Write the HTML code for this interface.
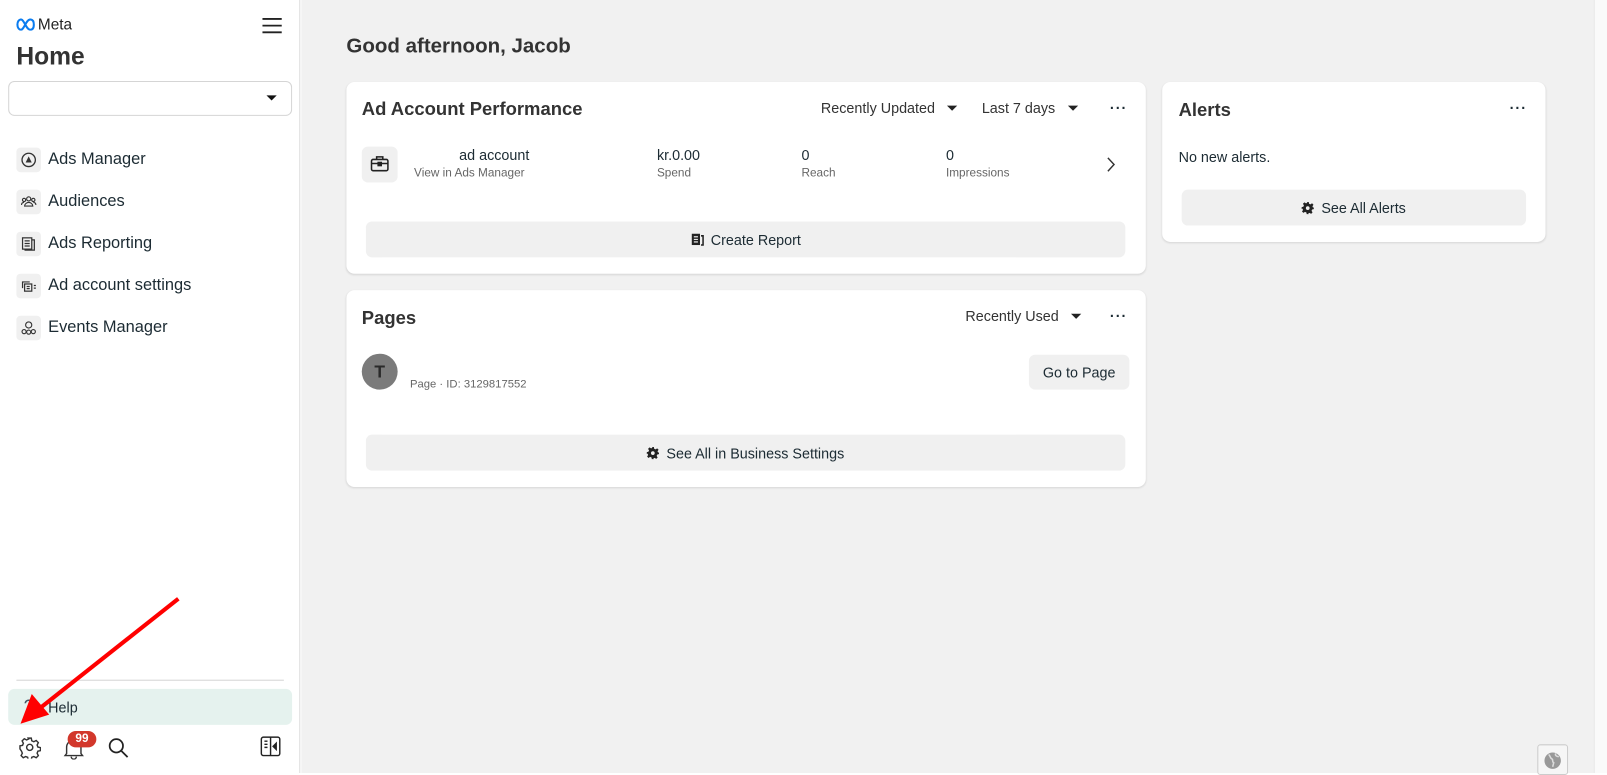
<!DOCTYPE html>
<html><head><meta charset="utf-8"><style>
*{box-sizing:border-box;margin:0;padding:0}
html,body{width:1607px;height:773px;overflow:hidden;background:#fff}
body{font-family:"Liberation Sans",Arial,sans-serif;color:#1c2b33}
#w{position:absolute;left:0;top:0;width:1568px;height:754px;transform:scale(1.02487,1.0252);transform-origin:0 0}
.a{position:absolute}
.side{left:0;top:0;width:293px;height:754px;background:#fff;border-right:1px solid #dcdcdc}
.main{left:294px;top:0;width:1261px;height:754px;background:#f1f1f1}
.strip{left:1555px;top:0;width:13px;height:754px;background:#fafafa;border-left:1px solid #e6e6e6}
.card{position:absolute;background:#fff;border-radius:8px;box-shadow:0 1px 2px rgba(0,0,0,.12)}
.ttl{position:absolute;font-size:18px;font-weight:bold;color:#333}
.btn{position:absolute;background:#f0f0f0;border-radius:6px;font-size:14px;display:flex;align-items:center;justify-content:center;gap:7px;color:#1c2b33}
.dots{position:absolute;font-size:14px;font-weight:bold;letter-spacing:1px}
.dd{position:absolute;font-size:14px;color:#333}
.dd:after{content:"";display:inline-block;margin-left:12px;border:5px solid transparent;border-top:5px solid #222;border-bottom:0;vertical-align:2px}
.nav{position:absolute;left:16px;display:flex;align-items:center;gap:7px;font-size:16px;color:#1c2b33}
.ni{width:24px;height:24px;background:#f0f0f0;border-radius:4px;display:flex;align-items:center;justify-content:center}
.v{position:absolute;font-size:14px}
.l{position:absolute;font-size:11.5px;color:#666}
</style></head><body><div id="w">
<div class="a side"></div>
<div class="a main"></div>
<div class="a strip"></div>

<svg class="a" style="left:15px;top:18px" width="20" height="12" viewBox="0 0 20 12"><path d="M2 6c0-3 1.5-5 3.5-5 3 0 5 10 9 10 2.5 0 3.5-2 3.5-5s-1-5-3.5-5c-4 0-6 10-9 10C3.5 11 2 9 2 6z" fill="none" stroke="#0a7cf0" stroke-width="2"/></svg>
<div class="a" style="left:37px;top:16px;font-size:15px;color:#222">Meta</div>
<svg class="a" style="left:256px;top:17px" width="19" height="16"><path d="M0 1.5h19M0 8h19M0 14.5h19" stroke="#222" stroke-width="1.8"/></svg>
<div class="a" style="left:16px;top:42px;font-size:24px;font-weight:bold;color:#333">Home</div>
<div class="a" style="left:8px;top:79px;width:277px;height:34px;border:1px solid #d5d5d5;border-radius:6px"></div>
<div class="a" style="left:260px;top:93px;border:5px solid transparent;border-top:5px solid #111;border-bottom:0"></div>

<div class="nav" style="top:144px"><div class="ni"><svg width="16" height="16"><circle cx="8" cy="8" r="6.5" fill="none" stroke="#333" stroke-width="1.3"/><path d="M8 4.5l3 6H5z" fill="#333"/></svg></div>Ads Manager</div>
<div class="nav" style="top:185px"><div class="ni"><svg width="16" height="16" fill="none" stroke="#333" stroke-width="1.1"><circle cx="8" cy="5" r="2"/><circle cx="3.5" cy="6" r="1.6"/><circle cx="12.5" cy="6" r="1.6"/><path d="M4 12c0-2 2-3.5 4-3.5s4 1.5 4 3.5zM1 11c0-1.5 1-2.5 2.5-2.5M15 11c0-1.5-1-2.5-2.5-2.5"/></svg></div>Audiences</div>
<div class="nav" style="top:226px"><div class="ni"><svg width="16" height="16" fill="none" stroke="#333" stroke-width="1.2"><rect x="2" y="2" width="9" height="11"/><path d="M11 4h2.5v10H4.5v-1M4 5h5M4 7.5h5M4 10h5"/></svg></div>Ads Reporting</div>
<div class="nav" style="top:267px"><div class="ni"><svg width="16" height="16" fill="none" stroke="#333" stroke-width="1.2"><path d="M2 10V4h7"/><rect x="4" y="6" width="7" height="7"/><path d="M6 8.5h3M6 10.5h3M13 7.5h2M13 10h2"/></svg></div>Ad account settings</div>
<div class="nav" style="top:308px"><div class="ni"><svg width="16" height="16" fill="none" stroke="#333" stroke-width="1.1"><circle cx="8" cy="5" r="3"/><circle cx="3.5" cy="11.5" r="2"/><circle cx="8" cy="12" r="2"/><circle cx="12.5" cy="11.5" r="2"/></svg></div>Events Manager</div>

<div class="a" style="left:16px;top:663px;width:261px;height:1px;background:#d5d5d5"></div>
<div class="a" style="left:8px;top:672px;width:277px;height:35px;background:#e5f2ee;border-radius:6px"></div>
<div class="a" style="left:23px;top:679px;font-size:18px;color:#456">?</div>
<div class="a" style="left:47px;top:682px;font-size:14px;color:#1c2b33">Help</div>

<svg class="a" style="left:18px;top:718px" width="22" height="22" fill="none" stroke="#333" stroke-width="1.4"><circle cx="11" cy="11" r="3"/><path d="M9.5 2h3l.5 2.5 2 1 2.3-1.2 2.1 2.1-1.2 2.3.8 2 2.5.5v3l-2.5.5-.8 2 1.2 2.3-2.1 2.1-2.3-1.2-2 .8-.5 2.5h-3l-.5-2.5-2-.8-2.3 1.2-2.1-2.1 1.2-2.3-.8-2L1.5 12.5v-3l2.5-.5.8-2-1.2-2.3 2.1-2.1 2.3 1.2 2-1z"/></svg>
<svg class="a" style="left:62px;top:719px" width="20" height="22" fill="none" stroke="#333" stroke-width="1.4"><path d="M3 16V10a7 7 0 0114 0v6l1.5 2h-17zM7.5 19a2.5 2.5 0 005 0"/></svg>
<div class="a" style="left:66px;top:713px;width:28px;height:16px;background:#d2372b;border-radius:8px;color:#fff;font-size:11.5px;font-weight:bold;text-align:center;line-height:16px">99</div>
<svg class="a" style="left:105px;top:719px" width="21" height="21" fill="none" stroke="#222" stroke-width="1.7"><circle cx="8.5" cy="8.5" r="6.5"/><path d="M13.5 13.5l6 6"/></svg>
<svg class="a" style="left:254px;top:718px" width="20" height="20" fill="none" stroke="#222" stroke-width="1.4"><rect x="1" y="1" width="18" height="18" rx="2"/><path d="M10 1v18M4 5h3M4 8h3M4 11h3"/><path d="M15.5 7v6l-3-3z" fill="#222"/></svg>

<svg class="a" style="left:0;top:560px" width="200" height="160"><path d="M174 24L40 130" stroke="#f00" stroke-width="4"/><path d="M20 146l11-29 17 20z" fill="#f00"/></svg>

<div class="a" style="left:338px;top:34px;font-size:20px;font-weight:bold;color:#333">Good afternoon, Jacob</div>

<div class="card" style="left:338px;top:80px;width:780px;height:187px">
 <div class="ttl" style="left:15px;top:16px">Ad Account Performance</div>
 <div class="dd" style="left:463px;top:17px">Recently Updated</div>
 <div class="dd" style="left:620px;top:17px">Last 7 days</div>
 <div class="dots" style="left:745px;top:17px">···</div>
 <div class="a" style="left:15px;top:63px;width:35px;height:35px;background:#f0f0f0;border-radius:6px"></div>
 <svg class="a" style="left:23px;top:71px" width="19" height="18" fill="none" stroke="#222" stroke-width="1.5"><rect x="1.5" y="4.5" width="16" height="11" rx="1.5"/><path d="M6.5 4.5V2h6v2.5M1.5 8.5h16"/><rect x="8" y="7.5" width="3" height="3" fill="#222"/></svg>
 <div class="v" style="left:110px;top:63px">ad account</div>
 <div class="l" style="left:66px;top:83px">View in Ads Manager</div>
 <div class="v" style="left:303px;top:63px">kr.0.00</div><div class="l" style="left:303px;top:83px">Spend</div>
 <div class="v" style="left:444px;top:63px">0</div><div class="l" style="left:444px;top:83px">Reach</div>
 <div class="v" style="left:585px;top:63px">0</div><div class="l" style="left:585px;top:83px">Impressions</div>
 <svg class="a" style="left:741px;top:73px" width="10" height="15" fill="none" stroke="#333" stroke-width="1.4"><path d="M2 1l6 6.5L2 14"/></svg>
 <div class="btn" style="left:19px;top:136px;width:741px;height:35px"><svg width="13" height="13"><rect x="1" y="1" width="8" height="11" fill="#222"/><path d="M3 4h4M3 6.5h4M3 9h4" stroke="#fff"/><path d="M10 3h2v9h-2" fill="none" stroke="#222" stroke-width="1.5"/></svg>Create Report</div>
</div>

<div class="card" style="left:338px;top:283px;width:780px;height:192px">
 <div class="ttl" style="left:15px;top:17px">Pages</div>
 <div class="dd" style="left:604px;top:17px">Recently Used</div>
 <div class="dots" style="left:745px;top:17px">···</div>
 <div class="a" style="left:15px;top:62px;width:35px;height:35px;background:#7b7b7b;border-radius:50%;color:#2a2a2a;font-weight:bold;font-size:17px;text-align:center;line-height:35px">T</div>
 <div class="l" style="left:62px;top:86px;font-size:11px">Page · ID: 3129817552</div>
 <div class="btn" style="left:666px;top:63px;width:98px;height:34px">Go to Page</div>
 <div class="btn" style="left:19px;top:141px;width:741px;height:35px"><svg width="12" height="12" viewBox="0 0 12 12"><path d="M5 0h2l.3 1.7 1.4.6L10.2 1.3l1.4 1.4-1 1.5.6 1.4L12 5v2l-1.7.3-.6 1.4 1 1.5-1.4 1.4-1.5-1-1.4.6L7 12H5l-.3-1.7-1.4-.6-1.5 1L.4 9.3l1-1.5-.6-1.4L0 7V5l1.7-.3.6-1.4-1-1.5L2.8.4l1.5 1 1.4-.6z" fill="#222"/><circle cx="6" cy="6" r="1.8" fill="#f0f0f0"/></svg>See All in Business Settings</div>
</div>

<div class="card" style="left:1134px;top:80px;width:374px;height:156px">
 <div class="ttl" style="left:16px;top:17px">Alerts</div>
 <div class="dots" style="left:339px;top:17px">···</div>
 <div class="a" style="left:16px;top:65px;font-size:14px">No new alerts.</div>
 <div class="btn" style="left:19px;top:105px;width:336px;height:35px"><svg width="12" height="12" viewBox="0 0 12 12"><path d="M5 0h2l.3 1.7 1.4.6L10.2 1.3l1.4 1.4-1 1.5.6 1.4L12 5v2l-1.7.3-.6 1.4 1 1.5-1.4 1.4-1.5-1-1.4.6L7 12H5l-.3-1.7-1.4-.6-1.5 1L.4 9.3l1-1.5-.6-1.4L0 7V5l1.7-.3.6-1.4-1-1.5L2.8.4l1.5 1 1.4-.6z" fill="#222"/><circle cx="6" cy="6" r="1.8" fill="#f0f0f0"/></svg>See All Alerts</div>
</div>

<div class="a" style="left:1500px;top:726px;width:30px;height:30px;background:#f6f6f6;border:1px solid #ccc;border-radius:3px"></div>
<svg class="a" style="left:1506px;top:733px" width="18" height="18"><circle cx="9" cy="9" r="8" fill="#999"/><path d="M5 3c2 1 1 3 3 4s0 3 2 4l-1 4M12 2c-1 2 1 3 3 3" stroke="#ddd" stroke-width="1.5" fill="none"/></svg>
</div></body></html>
